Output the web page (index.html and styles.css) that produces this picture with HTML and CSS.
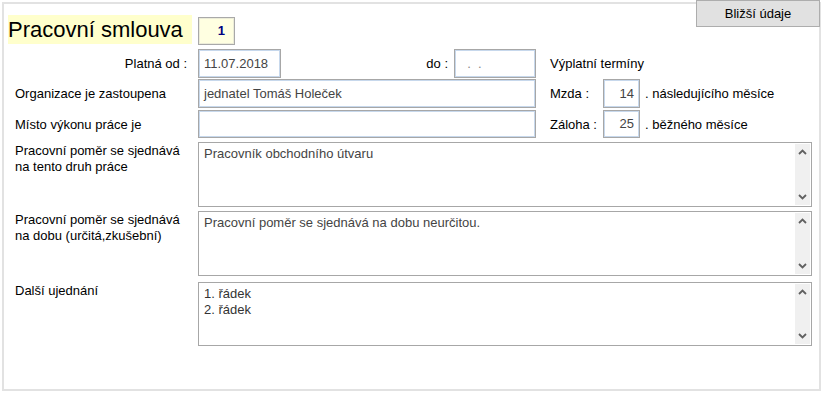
FILE: index.html
```html
<!DOCTYPE html>
<html lang="cs">
<head>
    <meta charset="UTF-8">
    <title>Pracovní smlouva</title>
    <link rel="stylesheet" href="styles.css">
</head>
<body>
    <div class="frame">
        <button class="detail-btn">Bližší údaje</button>

        <!-- Header -->
        <div class="header">
            <div class="title">Pracovní smlouva</div>
            <div class="number">1</div>
        </div>

        <!-- Platnost -->
        <div class="row row-1">
            <div class="label label-right">Platná od :</div>
            <div class="mid">
                <div class="field date">11.07.2018</div>
                <div class="to">do :</div>
                <div class="field date date-to">&nbsp;&nbsp;.&nbsp;&nbsp;.</div>
            </div>
            <div class="right">Výplatní termíny</div>
        </div>

        <div class="row row-2">
            <div class="label">Organizace je zastoupena</div>
            <div class="mid">
                <div class="field wide">jednatel Tomáš Holeček</div>
            </div>
            <div class="right">
                <span class="right-label">Mzda :</span>
                <div class="field day">14</div>
                <span class="suffix">. následujícího měsíce</span>
            </div>
        </div>

        <div class="row row-3">
            <div class="label">Místo výkonu práce je</div>
            <div class="mid">
                <div class="field wide"></div>
            </div>
            <div class="right">
                <span class="right-label">Záloha :</span>
                <div class="field day">25</div>
                <span class="suffix">. běžného měsíce</span>
            </div>
        </div>

        <!-- Memo fields -->
        <div class="memo-row memo-1">
            <div class="label memo-label">Pracovní poměr se sjednává<br>na tento druh práce</div>
            <div class="memo">
                <div class="memo-text">Pracovník obchodního útvaru</div>
                <div class="scroll">
                    <svg width="15" height="17" viewBox="0 0 15 17"><path d="M4 10 L7.5 6.5 L11 10" fill="none" stroke="#606060" stroke-width="1.8"/></svg>
                    <svg width="15" height="17" viewBox="0 0 15 17"><path d="M4 7 L7.5 10.5 L11 7" fill="none" stroke="#606060" stroke-width="1.8"/></svg>
                </div>
            </div>
        </div>

        <div class="memo-row memo-2">
            <div class="label memo-label">Pracovní poměr se sjednává<br>na dobu (určitá,zkušební)</div>
            <div class="memo">
                <div class="memo-text">Pracovní poměr se sjednává na dobu neurčitou.</div>
                <div class="scroll">
                    <svg width="15" height="17" viewBox="0 0 15 17"><path d="M4 10 L7.5 6.5 L11 10" fill="none" stroke="#606060" stroke-width="1.8"/></svg>
                    <svg width="15" height="17" viewBox="0 0 15 17"><path d="M4 7 L7.5 10.5 L11 7" fill="none" stroke="#606060" stroke-width="1.8"/></svg>
                </div>
            </div>
        </div>

        <div class="memo-row memo-3">
            <div class="label memo-label">Další ujednání</div>
            <div class="memo">
                <div class="memo-text dark">1. řádek<br>2. řádek</div>
                <div class="scroll">
                    <svg width="15" height="17" viewBox="0 0 15 17"><path d="M4 10 L7.5 6.5 L11 10" fill="none" stroke="#606060" stroke-width="1.8"/></svg>
                    <svg width="15" height="17" viewBox="0 0 15 17"><path d="M4 7 L7.5 10.5 L11 7" fill="none" stroke="#606060" stroke-width="1.8"/></svg>
                </div>
            </div>
        </div>
    </div>
</body>
</html>
```

FILE: styles.css
```css
* {
    padding: 0px;
    margin: 0px;
    box-sizing: border-box;
}
body {
    background-color: #fff;
    font-family: "Liberation Sans", Arial, sans-serif;
    font-size: 13px;
    color: #000;
    overflow: hidden;
}

/* FRAME */
.frame {
    position: relative;
    margin: 2px 0 0 2px;
    width: 819px;
    height: 389px;
    border: 2px solid #e2e2e2;
    padding: 11px 0 0 4px;
}
.detail-btn {
    position: absolute;
    top: -4px;
    right: -1px;
    width: 124px;
    height: 27px;
    background-color: #e1e1e1;
    border: 1px solid #adadad;
    font-family: inherit;
    font-size: 13px;
    color: #000;
}

/* HEADER */
.header {
    display: flex;
    height: 30px;
}
.title {
    width: 184px;
    height: 29px;
    background-color: #ffffcc;
    font-size: 22px;
    line-height: 29px;
}
.number {
    margin: 2px 0 0 6px;
    width: 37px;
    height: 28px;
    background-color: #ffffe1;
    border: 1px solid #a9a9a9;
    box-shadow: inset 0 0 0 1px #ececd8;
    color: #000080;
    font-weight: bold;
    text-align: right;
    line-height: 26px;
    padding-right: 9px;
}

/* ROWS */
.row {
    display: flex;
    align-items: center;
    height: 29px;
}
.row-1 { margin-top: 4px; }
.row-2 { margin-top: 1px; }
.row-3 { margin-top: 2px; height: 28px; }
.label {
    width: 190px;
    flex-shrink: 0;
    padding-left: 7px;
}
.label-right {
    text-align: right;
    padding-right: 11px;
}
.mid {
    width: 338px;
    height: 100%;
    display: flex;
    align-items: center;
}
.right {
    margin-left: 14px;
    height: 100%;
    display: flex;
    align-items: center;
}
.right-label {
    width: 53px;
}
.suffix {
    margin-left: 5px;
}
.to {
    flex: 1;
    text-align: right;
    padding-right: 6px;
}

/* FIELDS */
.field {
    height: 100%;
    border: 1px solid #a7a7a7;
    box-shadow: inset 0 0 0 1px #c7d8ec;
    background-color: #fff;
    color: #444;
    display: flex;
    align-items: center;
    padding: 0 5px 1px;
    white-space: nowrap;
}
.date {
    width: 83px;
}
.date-to {
    width: 82px;
    color: #888;
}
.wide {
    width: 338px;
}
.day {
    width: 37px;
    justify-content: flex-end;
    padding-right: 5px;
}

/* MEMO */
.memo-row {
    display: flex;
    height: 65px;
}
.memo-1 { margin-top: 4px; }
.memo-2 { margin-top: 4px; }
.memo-3 { margin-top: 6px; height: 64px; }
.memo-label {
    padding-top: 1px;
    line-height: 16px;
}
.memo-text {
    flex: 1;
    color: #444;
    padding: 3px 5px;
    line-height: 16px;
}
.memo {
    width: 614px;
    height: 100%;
    border: 1px solid #a7a7a7;
    display: flex;
}
.memo-text.dark {
    color: #333;
}
.scroll {
    width: 15px;
    margin: 1px 1px 1px 0;
    background-color: #f0f0f0;
    display: flex;
    flex-direction: column;
    justify-content: space-between;
}
.scroll svg {
    display: block;
}
```
